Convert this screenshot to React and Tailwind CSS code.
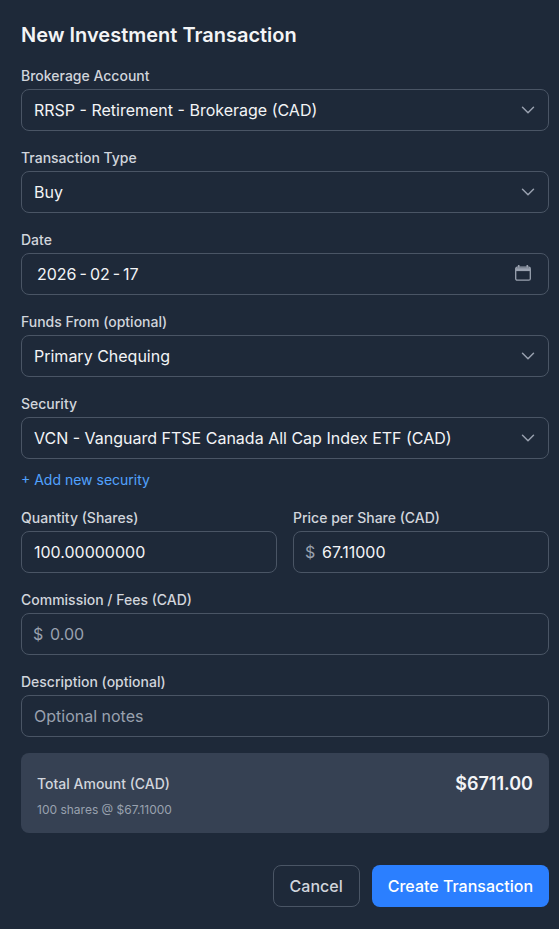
import { ChevronDown } from 'lucide-react';

const inputClass = 'w-full h-[42px] rounded-lg border border-gray-600 bg-gray-800 px-3 text-base text-gray-100 placeholder:text-gray-400 outline-none';

const Label = ({ children }) => (
  <label className="block mb-[3px] text-sm leading-5 font-medium text-gray-300">{children}</label>
);

const SelectField = ({ label, value }) => (
  <div>
    <Label>{label}</Label>
    <div className="relative">
      <select defaultValue={value} className={`${inputClass} appearance-none pr-9`}>
        <option>{value}</option>
      </select>
      <ChevronDown className="absolute right-[10px] top-[10px] w-[22px] h-[22px] text-gray-400 pointer-events-none" strokeWidth={1.6} />
    </div>
  </div>
);

const MoneyField = ({ label, value, placeholder }) => (
  <div className="flex-1 min-w-0">
    <Label>{label}</Label>
    <div className="relative">
      <span className="absolute left-3 top-[9px] text-base text-gray-400">$</span>
      <input
        defaultValue={value}
        placeholder={placeholder}
        className={`${inputClass} pl-7`}
      />
    </div>
  </div>
);

const App = () => {
  return (
    <div className="min-h-[929px] bg-gray-800 pl-[21px] pr-[10px] pt-[22px] font-['Inter',sans-serif]">
      <h2 className="text-xl leading-[26px] font-semibold text-gray-100 mb-[18px]">New Investment Transaction</h2>

      <div className="flex flex-col gap-[17px]">
        <SelectField label="Brokerage Account" value="RRSP - Retirement - Brokerage (CAD)" />
        <SelectField label="Transaction Type" value="Buy" />

        <div>
          <Label>Date</Label>
          <div className="relative">
            <input defaultValue="2026 - 02 - 17" className={`${inputClass} pl-[15px] [word-spacing:-1.5px]`} />
            <svg className="absolute right-[18px] top-[12px] w-4 h-4 text-gray-400" viewBox="0 0 16 16" fill="none" stroke="currentColor" strokeWidth="1.3">
              <rect x="0.7" y="2.2" width="14.6" height="13" rx="1.5" />
              <path d="M1 4.6h14" strokeWidth="3" />
              <path d="M3.7 0v2.5M12.3 0v2.5" strokeWidth="1.6" />
            </svg>
          </div>
        </div>

        <SelectField label="Funds From (optional)" value="Primary Chequing" />

        <div>
          <SelectField label="Security" value="VCN - Vanguard FTSE Canada All Cap Index ETF (CAD)" />
          <button className="block mt-[11px] text-sm leading-5 text-blue-400">+ Add new security</button>
        </div>
      </div>

      <div className="flex flex-col gap-[17px] mt-[18px]">
        <div className="flex gap-4">
          <div className="flex-1 min-w-0">
            <Label>Quantity (Shares)</Label>
            <input defaultValue="100.00000000" className={inputClass} />
          </div>
          <MoneyField label="Price per Share (CAD)" value="67.11000" />
        </div>

        <MoneyField label="Commission / Fees (CAD)" placeholder="0.00" />

        <div>
          <Label>Description (optional)</Label>
          <input placeholder="Optional notes" className={inputClass} />
        </div>
      </div>

      <div className="mt-4 h-20 rounded-lg bg-gray-700 px-4 pt-[21px] flex justify-between items-start">
        <div>
          <p className="text-sm leading-5 font-medium text-gray-300">Total Amount (CAD)</p>
          <p className="mt-[8px] text-xs leading-4 text-gray-400">100 shares @ $67.11000</p>
        </div>
        <p className="text-lg leading-5 font-semibold text-gray-100">$6711.00</p>
      </div>

      <div className="mt-8 flex justify-end gap-3">
        <button className="h-[42px] px-4 rounded-lg border border-gray-600 text-base font-medium text-gray-300">Cancel</button>
        <button className="h-[42px] px-4 rounded-lg bg-blue-500 text-base font-medium text-white">Create Transaction</button>
      </div>
    </div>
  );
};

export default App;
